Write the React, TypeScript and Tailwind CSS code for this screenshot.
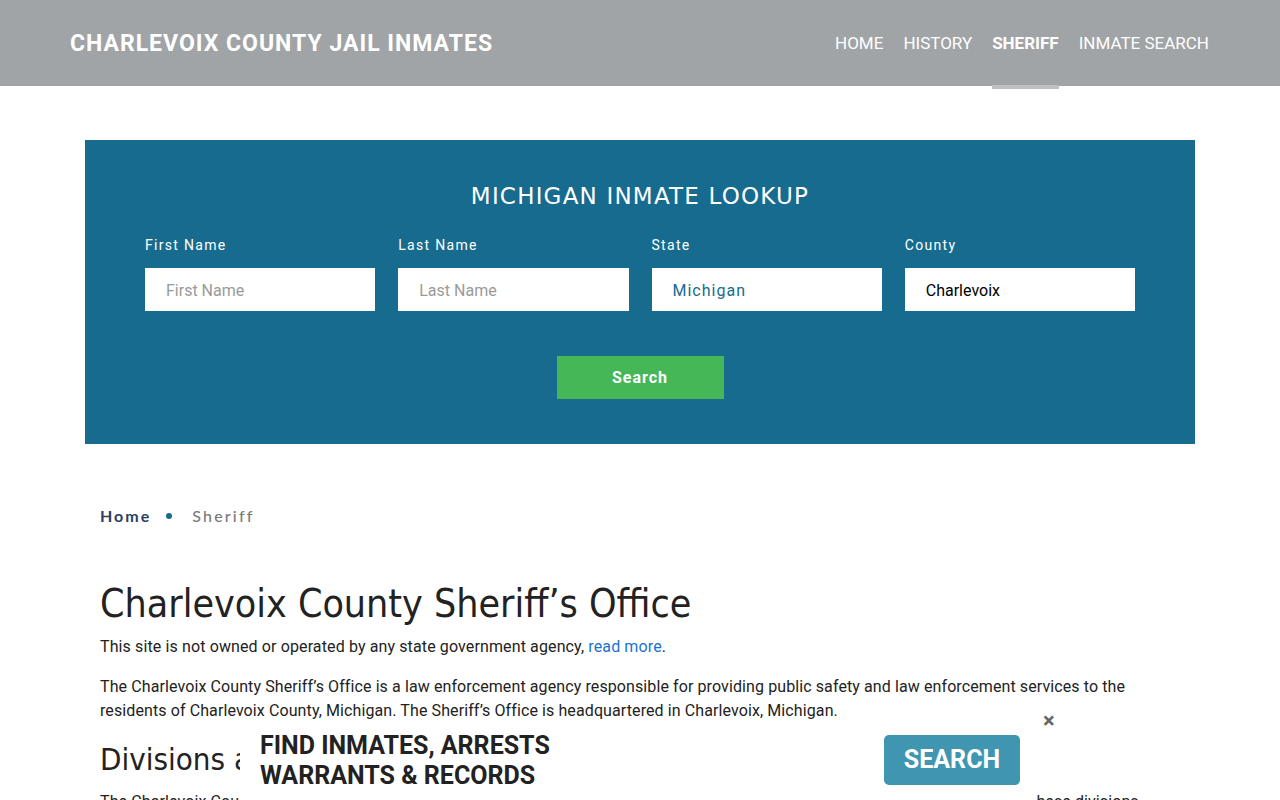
import React from "react";

const rob = { fontFamily: 'Roboto,"Liberation Sans",sans-serif' };

export default function App() {
  return (
    <div className="relative min-h-[800px] bg-white overflow-hidden" style={rob}>
      <header className="h-[86px] bg-[#a0a4a7] flex items-center justify-between pl-[70px] pr-[71px]">
        <div className="text-white text-[23px] font-bold tracking-[1px] pt-[2px]" style={rob}>CHARLEVOIX COUNTY JAIL INMATES</div>
        <nav className="flex gap-[20px] text-white text-[17px] h-full items-center pt-[2px]" style={rob}>
          <span>HOME</span>
          <span>HISTORY</span>
          <span className="relative font-bold h-full flex items-center">
            SHERIFF
            <span className="absolute left-0 right-0 bottom-[-3px] h-[4px] bg-[#bdbfc0]" />
          </span>
          <span>INMATE SEARCH</span>
        </nav>
      </header>

      <section className="mx-[85px] mt-[54px] bg-[#176b8f] h-[304px] px-[60px] pt-[39px]">
        <h2 className="text-center text-white text-[23px] tracking-[1.2px]" style={{ fontFamily: '"DejaVu Sans",sans-serif', fontWeight: 400 }}>MICHIGAN INMATE LOOKUP</h2>
        <div className="grid grid-cols-4 gap-x-[23px] mt-[21px]">
          {[
            ["First Name", "First Name", "placeholder"],
            ["Last Name", "Last Name", "placeholder"],
            ["State", "Michigan", "state"],
            ["County", "Charlevoix", "value"],
          ].map(([label, val, kind]) => (
            <div key={label}>
              <div className="text-white text-[14px] tracking-[1.3px] h-[20px] leading-[20px]">{label}</div>
              <div
                className={
                  "mt-[13px] h-[43px] bg-white flex items-center px-[21px] pt-[3px] text-[16px] " +
                  (kind === "placeholder" ? "text-[#9a9a9a]" : kind === "state" ? "text-[#176b8f] tracking-[1px]" : "text-black")
                }
              >
                {val}
              </div>
            </div>
          ))}
        </div>
        <div className="flex justify-center mt-[45px]">
          <button className="w-[167px] h-[43px] bg-[#45b757] text-white font-bold text-[16px] tracking-[1px] pt-[2px]">Search</button>
        </div>
      </section>

      <main className="px-[100px]">
        <div className="mt-[60px] flex items-center text-[16px] tracking-[2px] font-medium" style={{ fontFamily: 'Lato,sans-serif' }}>
          <span className="text-[#2c3e5f] font-bold">Home</span>
          <span className="ml-[15px] mr-[20px] w-[6px] h-[6px] rounded-full bg-[#176b8f]" />
          <span className="text-[#7a7a7a] tracking-[2.2px]">Sheriff</span>
        </div>
        <h1 className="mt-[52px] text-[39px] text-[#222] leading-[48px]" style={{ fontFamily: '"DejaVu Sans Condensed","DejaVu Sans",sans-serif', fontWeight: 400 }}>
          Charlevoix County Sheriff’s Office
        </h1>
        <p className="text-[16px] text-[#222] leading-[24px] mt-[7px] tracking-[0.12px]">
          This site is not owned or operated by any state government agency, <span className="text-[#1a73d1]">read more</span>.
        </p>
        <p className="text-[16px] text-[#222] leading-[24px] mt-[16px] max-w-[1080px] tracking-[0.1px]">
          The Charlevoix County Sheriff’s Office is a law enforcement agency responsible for providing public safety and law enforcement services to the residents of Charlevoix County, Michigan. The Sheriff’s Office is headquartered in Charlevoix, Michigan.
        </p>
        <h2 className="mt-[16px] text-[31px] text-[#222] leading-[40px]" style={{ fontFamily: '"DejaVu Sans Condensed","DejaVu Sans",sans-serif', fontWeight: 400 }}>
          Divisions and Units
        </h2>
        <p className="text-[16px] text-[#222] leading-[24px] mt-[11px] max-w-[1080px] tracking-[0.1px]">
          The Charlevoix County Sheriff’s Office is organized into several divisions, each with its own specific roles and key duties. Some of these divisions include:
        </p>
      </main>

      <div className="absolute left-[240px] top-[728px] w-[797px] h-[72px] bg-white flex items-start pl-[20px] pr-[17px]">
        <div className="text-[#222] text-[25px] font-bold leading-[30px] mt-[3px]" style={rob}>
          FIND INMATES, ARRESTS
          <br />
          WARRANTS &amp; RECORDS
        </div>
        <button className="ml-auto mt-[7px] w-[136px] h-[50px] rounded-[5px] bg-[#4096b0] text-white text-[25px] font-bold" style={rob}>
          SEARCH
        </button>
      </div>
      <div className="absolute left-[1043px] top-[710px] text-[#666] text-[22px] leading-[22px] font-bold">×</div>
    </div>
  );
}
